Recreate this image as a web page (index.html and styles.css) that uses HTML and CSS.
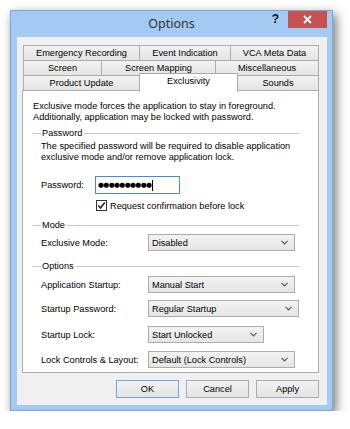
FILE: index.html
```html
<!DOCTYPE html>
<html lang="en">
<head>
  <meta charset="UTF-8">
  <title>Options</title>
  <link rel="stylesheet" href="styles.css">
</head>
<body>

  <div class="window">
    <div class="titlebar">
      <span></span>
      <span class="title">Options</span>
      <div class="controls">
        <span class="help">?</span>
        <span class="close">
          <svg width="9" height="9" viewBox="0 0 9 9"><path d="M1 1 L8 8 M8 1 L1 8" stroke="#fff" stroke-width="1.8"/></svg>
        </span>
      </div>
    </div>

    <div class="client">
      <div class="tabs">
        <div class="tab-row">
          <div class="tab" style="width: 117px">Emergency Recording</div>
          <div class="tab" style="width: 92px">Event Indication</div>
          <div class="tab" style="width: 89px">VCA Meta Data</div>
        </div>
        <div class="tab-row">
          <div class="tab" style="width: 79px">Screen</div>
          <div class="tab" style="width: 115px">Screen Mapping</div>
          <div class="tab" style="width: 104px">Miscellaneous</div>
        </div>
        <div class="tab-row">
          <div class="tab" style="width: 117px">Product Update</div>
          <div class="tab active" style="width: 99px">Exclusivity</div>
          <div class="tab" style="width: 82px">Sounds</div>
        </div>
      </div>

      <div class="panel">
        <p class="intro">Exclusive mode forces the application to stay in foreground.<br>Additionally, application may be locked with password.</p>

        <div class="group-head"><span>Password</span></div>
        <div class="group-body">
          <p class="desc">The specified password will be required to disable application<br>exclusive mode and/or remove application lock.</p>
          <div class="pw-row">
            <span class="label short">Password:</span>
            <div class="textbox"><span class="dots">●●●●●●●●●●</span><span class="caret"></span></div>
          </div>
          <div class="check-row">
            <span class="checkbox">
              <svg width="9" height="9" viewBox="0 0 9 9"><path d="M1.2 4.6 L3.5 7 L7.8 1.5" fill="none" stroke="#222" stroke-width="1.5"/></svg>
            </span>
            <span>Request confirmation before lock</span>
          </div>
        </div>

        <div class="group-head mode"><span>Mode</span></div>
        <div class="group-body">
          <div class="field first">
            <span class="label">Exclusive Mode:</span>
            <div class="select" style="width: 147px">Disabled<svg width="7" height="5" viewBox="0 0 7 5"><path d="M0.5 0.8 L3.5 3.8 L6.5 0.8" fill="none" stroke="#555" stroke-width="1.2"/></svg></div>
          </div>
        </div>

        <div class="group-head options"><span>Options</span></div>
        <div class="group-body">
          <div class="field first">
            <span class="label">Application Startup:</span>
            <div class="select" style="width: 147px">Manual Start<svg width="7" height="5" viewBox="0 0 7 5"><path d="M0.5 0.8 L3.5 3.8 L6.5 0.8" fill="none" stroke="#555" stroke-width="1.2"/></svg></div>
          </div>
          <div class="field">
            <span class="label">Startup Password:</span>
            <div class="select" style="width: 154px">Regular Startup<svg width="7" height="5" viewBox="0 0 7 5"><path d="M0.5 0.8 L3.5 3.8 L6.5 0.8" fill="none" stroke="#555" stroke-width="1.2"/></svg></div>
          </div>
          <div class="field lock">
            <span class="label">Startup Lock:</span>
            <div class="select" style="width: 116px">Start Unlocked<svg width="7" height="5" viewBox="0 0 7 5"><path d="M0.5 0.8 L3.5 3.8 L6.5 0.8" fill="none" stroke="#555" stroke-width="1.2"/></svg></div>
          </div>
          <div class="field">
            <span class="label">Lock Controls &amp; Layout:</span>
            <div class="select" style="width: 147px">Default (Lock Controls)<svg width="7" height="5" viewBox="0 0 7 5"><path d="M0.5 0.8 L3.5 3.8 L6.5 0.8" fill="none" stroke="#555" stroke-width="1.2"/></svg></div>
          </div>
        </div>
      </div>

      <div class="buttons">
        <button class="default">OK</button>
        <button>Cancel</button>
        <button>Apply</button>
      </div>
    </div>
  </div>

</body>
</html>
```

FILE: styles.css
```css
* {
  margin: 0;
  padding: 0;
  box-sizing: border-box;
}

body {
  background-color: #fff;
  font-family: "Liberation Sans", Arial, sans-serif;
  font-size: 9.2px;
  color: #000;
}

.window {
  margin: 10px 0 0 10px;
  width: 323px;
  height: 401px;
  background-color: #a3caf2;
  border: 1px solid #7ea7d3;
  box-shadow: 3px 4px 10px rgba(0, 0, 0, 0.55);
}

.titlebar {
  height: 26px;
  display: grid;
  grid-template-columns: 1fr auto 1fr;
}

.title {
  font-family: "Noto Sans", sans-serif;
  font-size: 12.5px;
  color: #333;
  line-height: 26px;
}

.controls {
  display: flex;
  justify-content: flex-end;
  align-items: flex-start;
  padding-right: 5px;
}

.help {
  font-family: "Liberation Sans", sans-serif;
  font-weight: bold;
  font-size: 12px;
  line-height: 17px;
  margin-right: 9px;
  color: #111;
}

.close {
  width: 39px;
  height: 17px;
  background-color: #c75050;
  display: flex;
  align-items: center;
  justify-content: center;
}

.client {
  margin: 0 5px 0 6px;
  height: 368px;
  background-color: #f0f0f0;
  padding: 8px 8px 0 5px;
}

.tabs {
  padding-left: 1px;
}

.tab-row {
  display: flex;
  height: 16px;
  margin-bottom: -1px;
}

.tab {
  height: 16px;
  border: 1px solid #acacac;
  background: linear-gradient(#f2f2f2, #e4e4e4);
  text-align: center;
  line-height: 14px;
  white-space: nowrap;
}

.tab + .tab {
  margin-left: -1px;
}

.tab.active {
  position: relative;
  z-index: 2;
  height: 19px;
  margin-top: -2px;
  background: #fff;
  border-bottom: none;
  line-height: 15px;
}

.panel {
  height: 283px;
  background-color: #fff;
  border: 1px solid #acacac;
  padding: 10px 19px 0 10px;
}

.intro,
.desc {
  line-height: 11px;
}

.group-head {
  display: flex;
  align-items: center;
  height: 11px;
  margin-top: 5px;
}

.group-head::before {
  content: "";
  width: 8px;
  border-top: 1px solid #c8c8c8;
}

.group-head::after {
  content: "";
  flex: 1;
  border-top: 1px solid #c8c8c8;
}

.group-head span {
  padding: 0 2px 0 1px;
  line-height: 11px;
}

.group-head.mode {
  margin-top: 9px;
}

.group-head.options {
  margin-top: 10px;
}

.group-body {
  padding-left: 8px;
}

.desc {
  margin-top: 2px;
}

.pw-row {
  display: flex;
  align-items: center;
  height: 18px;
  margin-top: 13px;
}

.label {
  width: 107px;
  flex-shrink: 0;
}

.label.short {
  width: 54px;
}

.textbox {
  width: 85px;
  height: 18px;
  border: 1px solid #3e8ee0;
  background: #fff;
  display: flex;
  align-items: center;
  padding-left: 2px;
}

.dots {
  font-family: "DejaVu Sans", sans-serif;
  font-size: 6.8px;
  letter-spacing: -0.6px;
}

.caret {
  width: 1px;
  height: 11px;
  background: #000;
  margin-left: 1px;
}

.check-row {
  display: flex;
  align-items: center;
  height: 11px;
  margin-top: 6px;
  padding-left: 55px;
}

.checkbox {
  width: 11px;
  height: 11px;
  border: 1px solid #333;
  background: #fff;
  display: flex;
  align-items: center;
  justify-content: center;
  margin-right: 3px;
}

.field {
  display: flex;
  align-items: center;
  height: 17px;
  margin-top: 7px;
}

.field.first {
  margin-top: 3px;
}

.group-head.options + .group-body .field.first {
  margin-top: 4px;
}

.field.lock {
  margin-top: 9px;
}

.field.lock + .field {
  margin-top: 8px;
}

.select {
  height: 17px;
  border: 1px solid #acacac;
  background: linear-gradient(#f3f3f3, #e5e5e5);
  display: flex;
  align-items: center;
  justify-content: space-between;
  padding: 0 6px 0 3px;
}

.buttons {
  display: flex;
  justify-content: flex-end;
  gap: 7px;
  margin-top: 7px;
}

.buttons button {
  width: 63px;
  height: 18px;
  border: 1px solid #acacac;
  background: linear-gradient(#f2f2f2, #e4e4e4);
  font-family: "Liberation Sans", Arial, sans-serif;
  font-size: 9.2px;
  color: #000;
}

.buttons button.default {
  border-color: #6fa8e0;
}
```
